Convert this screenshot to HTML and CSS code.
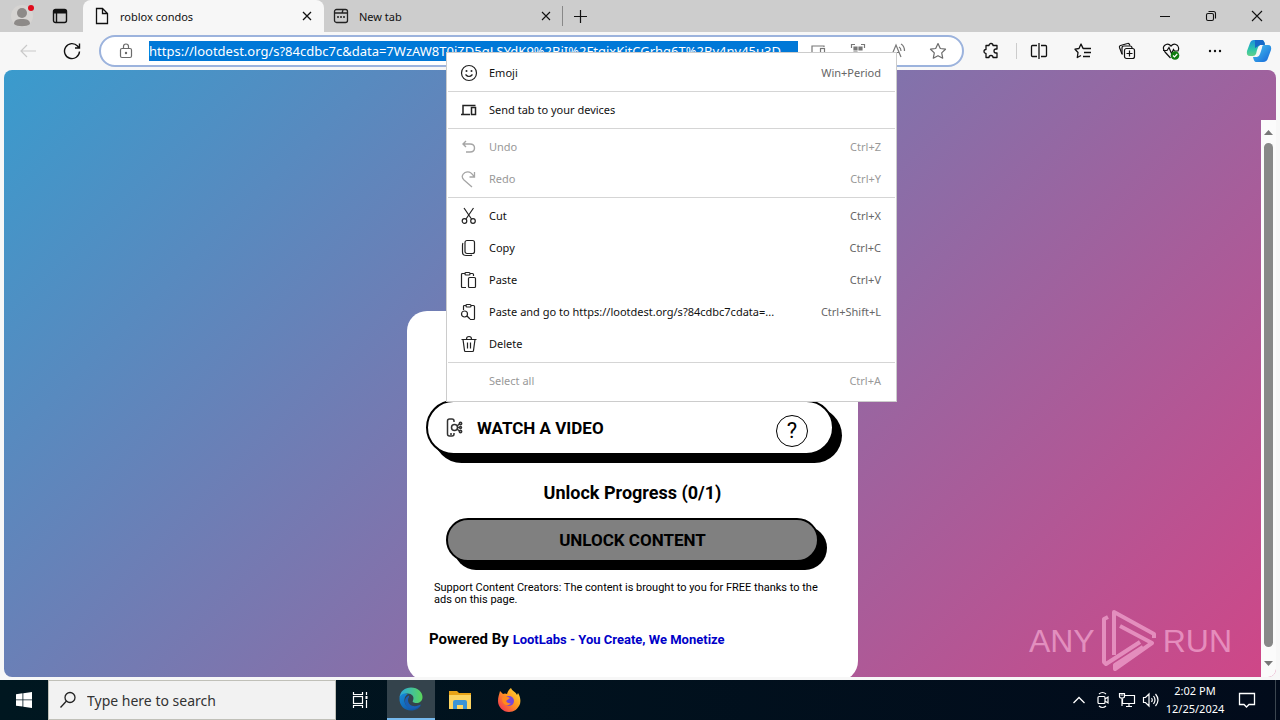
FILE: index.html
```html
<!DOCTYPE html>
<html lang="en">
<head>
<meta charset="utf-8">
<title>roblox condos</title>
<link rel="stylesheet" href="styles.css">
</head>
<body>
<div class="desktop">
  <header class="tabstrip">
    <button class="profile" aria-label="Profile"><svg width="24" height="26" viewBox="0 0 24 26"><circle cx="12" cy="13" r="11" fill="#d6d4d2"/><circle cx="12" cy="10" r="5" fill="#8d8a88"/><path d="M4 21c0-4 3-5 8-5s8 1 8 5c-3 3-13 3-16 0z" fill="#8d8a88"/><circle cx="21" cy="5" r="3" fill="#e00b1c"/></svg></button>
    <button class="workspace" aria-label="Tab actions"><svg width="16" height="16" viewBox="0 0 16 16" fill="none" stroke="#111" stroke-width="1.4"><rect x="1.5" y="1.5" width="13" height="13" rx="2"/><path d="M2 3h12M2 4.500h12" stroke-width="2"/><path d="M4.500 5v9"/></svg></button>
    <div class="tab tab-active">
      <svg width="16" height="18" viewBox="0 0 16 18" fill="none" stroke="#111" stroke-width="1.3"><path d="M2.500 1.500h6l5 5v10h-11zM8.500 1.500v5h5"/></svg>
      <span class="tab-title">roblox condos</span>
      <button class="tab-close" aria-label="Close tab"><svg width="10" height="10" viewBox="0 0 10 10" stroke="#111" stroke-width="1.3"><path d="M1 1l8 8M9 1L1 9"/></svg></button>
    </div>
    <div class="tab tab-second">
      <svg width="16" height="16" viewBox="0 0 16 16" fill="none" stroke="#222" stroke-width="1.3"><rect x="1.500" y="1.500" width="13" height="13" rx="2"/><path d="M2 5h7l1-3M9 5h5"/><path d="M4 9h2M7 9h2M10 9h2" stroke-width="1.500"/></svg>
      <span class="tab-title">New tab</span>
      <button class="tab-close" aria-label="Close tab"><svg width="10" height="10" viewBox="0 0 10 10" stroke="#111" stroke-width="1.1"><path d="M1 1l8 8M9 1L1 9"/></svg></button>
    </div>
    <button class="newtab" aria-label="New tab"><svg width="15" height="15" viewBox="0 0 15 15" stroke="#111" stroke-width="1.2"><path d="M7.500 1v13M1 7.500h13"/></svg></button>
    <div class="window-controls">
      <button aria-label="Minimize"><svg width="12" height="12" viewBox="0 0 12 12" stroke="#111"><path d="M1 6.500h10"/></svg></button>
      <button aria-label="Restore"><svg width="12" height="12" viewBox="0 0 12 12" fill="none" stroke="#111" stroke-width="1.1"><rect x="1.500" y="3.500" width="7" height="7" rx="1.500"/><path d="M3.500 1.500h5q2 0 2 2v5"/></svg></button>
      <button aria-label="Close"><svg width="12" height="12" viewBox="0 0 12 12" stroke="#111" stroke-width="1.1"><path d="M1 1l10 10M11 1L1 11"/></svg></button>
    </div>
  </header>

  <div class="toolbar">
    <button class="nav" aria-label="Back"><svg width="18" height="16" viewBox="0 0 18 16" fill="none" stroke="#c9c9c9" stroke-width="1.200"><path d="M17 8H2M8 2L2 8l6 6"/></svg></button>
    <button class="nav" aria-label="Refresh"><svg width="18" height="18" viewBox="0 0 18 18" fill="none" stroke="#111" stroke-width="1.400"><path d="M16.500 9.500a7.500 7.500 0 1 1-2-5.500l1.500 1.800M16.500 1.500v4.500H12"/></svg></button>
    <div class="address">
      <svg width="14" height="16" viewBox="0 0 14 16" fill="none" stroke="#6b6b6b" stroke-width="1.200"><rect x="1.500" y="5.500" width="11" height="9" rx="1.500"/><path d="M4.500 5.500V3.500a2.500 2.500 0 0 1 5 0v2"/><circle cx="7" cy="10" r=".6" fill="#555"/></svg>
      <input class="url" aria-label="Address" value="https://lootdest.org/s?84cdbc7c&amp;data=7WzAW8T0jZD5gLSYdK9%2BiI%2FtqjxKjtCGrhg6T%2By4nv45u3D">
      <button aria-label="Send to device"><svg width="16" height="16" viewBox="0 0 16 16" fill="none" stroke="#777" stroke-width="1.200"><path d="M14 4V3H2v9h6M0 12h8"/><rect x="10.500" y="5.500" width="4" height="8"/></svg></button>
      <button aria-label="Share code"><svg width="16" height="16" viewBox="0 0 16 16" fill="none" stroke="#777" stroke-width="1.200"><path d="M1.500 5V1.500H5M11 1.500h3.500V5M1.500 11v3.500H5M11 14.500h3.500V11"/><path d="M4 4h3v3H4zM9 4h3v3H9zM4 9h3v3H4z" fill="#777"/></svg></button>
      <button aria-label="Read aloud"><svg width="18" height="16" viewBox="0 0 18 16" fill="none" stroke="#777" stroke-width="1.200"><path d="M2 14L7 2l5 12M4 9.500h6M10 4q2 1 2 4M12 1q3.500 2 3.500 7"/></svg></button>
      <button aria-label="Favorite"><svg width="18" height="18" viewBox="0 0 18 18" fill="none" stroke="#6b6b6b" stroke-width="1.200"><path d="M9 1.500l2.300 5 5.200.7-3.800 3.700 1 5.300L9 13.700l-4.700 2.500 1-5.300L1.500 7.200l5.200-.7z" stroke-linejoin="round"/></svg></button>
    </div>
    <div class="actions">
      <button class="extensions" aria-label="Extensions"><svg width="18" height="18" viewBox="0 0 18 18" fill="none" stroke="#111" stroke-width="1.300"><path d="M4 3.500h3a2 2 0 1 1 4 0h4v3.500h-1a2 2 0 1 0 0 4h1v4.500h-4a2 2 0 1 0-4 0H4v-4a2 2 0 1 1 0-4z" stroke-linejoin="round"/></svg></button>
      <button aria-label="Split screen"><svg width="18" height="18" viewBox="0 0 18 18" fill="none" stroke="#111" stroke-width="1.300"><path d="M9 1v16M7 3.500H2.500q-1 0-1 1v9q0 1 1 1H7M11 3.500h4.500q1 0 1 1v9q0 1-1 1H11"/></svg></button>
      <button aria-label="Favorites"><svg width="18" height="18" viewBox="0 0 18 18" fill="none" stroke="#111" stroke-width="1.300"><path d="M9 6.500L7 2 5 6.500l-4 .7L4 10.500l-.7 5L7 13.500M7 2l2.200 4.500H17M10 10.500h7M9 14.500h7" stroke-linejoin="round"/></svg></button>
      <button aria-label="Collections"><svg width="18" height="18" viewBox="0 0 18 18" fill="none" stroke="#111" stroke-width="1.200"><path d="M4 12L1.500 5.500q-.5-1.500 1-2l7-2q1.500-.5 2 1l.3 1"/><path d="M4.500 12.500q-.5-.5-.5-1.500V6q0-2 2-2h6q2 0 2 2"/><rect x="6.500" y="6.500" width="10" height="10" rx="2"/><path d="M11.500 8.500v6M8.500 11.500h6"/></svg></button>
      <button aria-label="Browser essentials"><svg width="18" height="18" viewBox="0 0 18 18" fill="none" stroke="#111" stroke-width="1.200"><path d="M8.500 16L3 10Q0 6 2.500 3.500 6 .5 9 4q3-3.500 6.500-.5Q17.500 6 16 9M1 8.500h4l2-3 2.500 6 2-4 1 1.500h4"/><circle cx="13" cy="13.500" r="4.300" fill="#107c10" stroke="none"/><path d="M11 13.500l1.500 1.500 2.700-3" stroke="#fff"/></svg></button>
      <button aria-label="Settings and more"><svg width="16" height="4" viewBox="0 0 16 4" fill="#111"><circle cx="3" cy="2" r="1.200"/><circle cx="8" cy="2" r="1.200"/><circle cx="13" cy="2" r="1.200"/></svg></button>
      <button class="copilot" aria-label="Copilot"><svg width="26" height="24" viewBox="0 0 26 24"><defs><linearGradient id="cpa" x1="0" y1="0" x2="0" y2="1"><stop offset="0" stop-color="#1b8fdc"/><stop offset=".6" stop-color="#2fc6a8"/><stop offset="1" stop-color="#64d08a"/></linearGradient><linearGradient id="cpb" x1="0" y1="0" x2="1" y2="1"><stop offset="0" stop-color="#49c8f0"/><stop offset="1" stop-color="#1464d8"/></linearGradient></defs><path d="M8 1h8q2 0 3 4l-5 1q-2 1-3 5l-1 4q-1 2-3 2H4q-4 0-3-5L4 4q1-3 4-3z" fill="url(#cpa)"/><path d="M9 1h7q2 0 3 5h-5L9 9z" fill="#1769c8"/><path d="M18 6h4q4 0 3 5l-3 8q-1 4-5 4h-7q-2 0-3-5h4q2 0 3-3l2-6q0-3 2-3z" fill="url(#cpb)"/></svg></button>
    </div>
  </div>

  <main class="viewport">
    <div class="page">
      <section class="card">
        <div class="task">
          <button class="task-button">
            <svg width="18" height="20" viewBox="0 0 18 20" fill="none" stroke="#333" stroke-width="1.500"><path d="M9 4V3q0-2-2-2H4.500q-2 0-2 2v13q0 2 2 2H7q2 0 2-2v-1M5 16h2"/><circle cx="9.500" cy="9.500" r="3"/><path d="M12 8l3-2.500M12 9.500h2M12 11l3 2.500"/><circle cx="15.500" cy="5.500" r="1.200"/><circle cx="15.500" cy="9.500" r="1"/><circle cx="15.500" cy="13.500" r="1.200"/></svg>
            <span>WATCH A VIDEO</span>
          </button>
          <button class="help" aria-label="Help">?</button>
        </div>
        <h2 class="progress">Unlock Progress (0/1)</h2>
        <button class="unlock">UNLOCK CONTENT</button>
        <p class="support">Support Content Creators: The content is brought to you for FREE thanks to the ads on this page.</p>
        <p class="powered">Powered By <a href="#">LootLabs - You Create, We Monetize</a></p>
      </section>
      <div class="watermark">
        <span>ANY</span>
        <svg width="58" height="62" viewBox="0 0 58 62" fill="none" stroke="#f3a9d2" stroke-width="4" stroke-linejoin="round"><path d="M14 45V2l40 22v4M20 16l32 17L15 59v-4l28-18"/><path d="M8 7L4 9v43l2 2 34-22"/></svg>
        <span>RUN</span>
      </div>
    </div>
    <div class="scrollbar">
      <svg width="9" height="5" viewBox="0 0 9 5" fill="#777"><path d="M0 5l4.500-5L9 5z"/></svg>
      <div class="thumb"></div>
      <svg width="9" height="5" viewBox="0 0 9 5" fill="#777"><path d="M0 0l4.500 5L9 0z"/></svg>
    </div>
  </main>

  <footer class="taskbar">
    <button class="start" aria-label="Start"><svg width="16" height="16" viewBox="0 0 16 16" fill="#fff"><path d="M0 2.200l6.500-.9v6.200H0zM7.300 1.200L16 0v7.500H7.300zM0 8.300h6.500v6.200L0 13.700zM7.300 8.300H16V16l-8.700-1.200z"/></svg></button>
    <label class="search">
      <svg width="18" height="18" viewBox="0 0 18 18" fill="none" stroke="#222" stroke-width="1.300"><circle cx="11" cy="6.500" r="5"/><path d="M7.500 10L1.500 16.500"/></svg>
      <input type="text" placeholder="Type here to search" aria-label="Type here to search">
    </label>
    <div class="apps">
      <button aria-label="Task view"><svg width="18" height="18" viewBox="0 0 18 18" fill="none" stroke="#fff" stroke-width="1.200"><rect x="2.500" y="5.500" width="9" height="7"/><path d="M2.500 1v2.500h9V1M2.500 17v-2.500h9V17M15.500 1v3M15.500 9v8" /><path d="M14.500 5h2v3h-2z" fill="#fff" stroke="none"/></svg></button>
      <button class="app-active" aria-label="Microsoft Edge"><svg width="24" height="24" viewBox="0 0 24 24"><defs><linearGradient id="eg" x1="0" y1="0" x2="1" y2="0"><stop offset="0" stop-color="#29a8e0"/><stop offset="1" stop-color="#5ad65a"/></linearGradient><linearGradient id="eb" x1="0" y1="0" x2="1" y2="1"><stop offset="0" stop-color="#168bd8"/><stop offset="1" stop-color="#0f4b9c"/></linearGradient></defs><path d="M.5 11C1 4 6 .5 12 .5c7 0 11.500 5 11.500 9.500 0 4-3 6-6 6-3 0-4.500-1-3.500-2.500C16 9 12 6 8 6.500 4 7 1 9 .5 11z" fill="url(#eg)"/><path d="M.5 11C1 7 6 5.500 9 7c-4 2-5 8-1 12 4 3.500 10 2 14-1-2 4-6 5.500-10 5.500C5 23.500 0 18 .5 11z" fill="url(#eb)"/><path d="M10 10c-2 3-1 8 4 9 3 .5 6-.5 8-1.500-5 7-15 5-16-2-.500-3 1-6 4-7z" fill="#1a5fb4"/></svg></button>
      <button aria-label="File Explorer"><svg width="22" height="20" viewBox="0 0 22 20"><path d="M0 1h8l2 2h12v5H0z" fill="#e8a317"/><path d="M0 5h22v14H0z" fill="#fcd462"/><path d="M4 19v-7q0-2 2-2h10q2 0 2 2v7h-4v-4H8v4z" fill="#3a93d6"/></svg></button>
      <button aria-label="Firefox"><svg width="24" height="24" viewBox="0 0 24 24"><defs><linearGradient id="ff" x1="1" y1="0" x2="0" y2="1"><stop offset="0" stop-color="#ffe23c"/><stop offset=".45" stop-color="#ff9a1f"/><stop offset="1" stop-color="#f0225c"/></linearGradient></defs><path d="M3 3l3 3q2-1 4 0c1-4 3-5 4-6 1 3 5 4 6 7l1-2c2 3 3 7 2 11-2 5-6 8-11 8C6 24 1 19 1 13 1 9 2 7 3 3z" fill="url(#ff)"/><circle cx="12" cy="13" r="5" fill="#7648d8"/><path d="M5 10q4-3 8 0l-4 3q2 3 5 2-3 4-7 1-2-2-2-6z" fill="#ff8a1c"/></svg></button>
    </div>
    <div class="tray">
      <button aria-label="Show hidden icons"><svg width="14" height="8" viewBox="0 0 14 8" fill="none" stroke="#fff" stroke-width="1.300"><path d="M1.500 7L7 1.500 12.500 7"/></svg></button>
      <button aria-label="Meet now"><svg width="14" height="18" viewBox="0 0 14 18" fill="none" stroke="#fff" stroke-width="1.200"><rect x="2" y="5.500" width="7" height="7" rx="1"/><path d="M9 8l3-2v6l-3-2M3 3q3.500-3 7 0M3 15q3.500 3 7 0"/></svg></button>
      <button aria-label="Network"><svg width="18" height="16" viewBox="0 0 18 16" fill="none" stroke="#fff" stroke-width="1.200"><path d="M6 3.500h10.500v8H4.500V7M8 14.500h6M11 12v2M1.500 1.500h5v3q0 1.500-2.500 1.500t-2.500-1.500zM2.500 3h3M4 6v8"/></svg></button>
      <button aria-label="Volume"><svg width="18" height="16" viewBox="0 0 18 16" fill="none" stroke="#fff" stroke-width="1.200"><path d="M1.500 5.500h2L7 2v12l-3.500-3.500h-2zM9.500 6q1.500 2 0 4M11.500 4q3 4 0 8M13.500 2q5 6 0 12"/></svg></button>
      <div class="clock"><span>2:02 PM</span><span>12/25/2024</span></div>
      <button class="notifications" aria-label="Notifications"><svg width="18" height="18" viewBox="0 0 18 18" fill="none" stroke="#fff" stroke-width="1.300"><path d="M1.500 2.500h15v11H11l-2.500 2.500L6 13.500H1.500z"/></svg></button>
    </div>
  </footer>

  <div class="menu" role="menu">
    <button role="menuitem"><svg width="18" height="18" viewBox="0 0 18 18" fill="none" stroke="#222" stroke-width="1.200"><circle cx="9" cy="9" r="7.500"/><path d="M5.500 10.500q3.500 4 7 0"/><circle cx="6.500" cy="7" r=".4" fill="#222"/><circle cx="11.500" cy="7" r=".4" fill="#222"/></svg><span>Emoji</span><kbd>Win+Period</kbd></button>
    <hr>
    <button role="menuitem"><svg width="18" height="18" viewBox="0 0 18 18" fill="none" stroke="#222" stroke-width="1.500"><path d="M15.500 4.500H3V13M1 13.500h9" /><rect x="11.500" y="6.500" width="4" height="7"/></svg><span>Send tab to your devices</span></button>
    <hr>
    <button role="menuitem" disabled><svg width="18" height="18" viewBox="0 0 18 18" fill="none" stroke="#a5a5a5" stroke-width="1.400"><path d="M6 3L3 6l3 3M3 6h7q4.500 0 4.500 4T10 14H6"/></svg><span>Undo</span><kbd>Ctrl+Z</kbd></button>
    <button role="menuitem" disabled><svg width="18" height="18" viewBox="0 0 18 18" fill="none" stroke="#a5a5a5" stroke-width="1.300"><path d="M14.500 2v5h-5M14 6.500Q10 0 5 2.500 0 6 4 10l8 7"/></svg><span>Redo</span><kbd>Ctrl+Y</kbd></button>
    <hr>
    <button role="menuitem"><svg width="18" height="18" viewBox="0 0 18 18" fill="none" stroke="#222" stroke-width="1.200"><circle cx="4.500" cy="14" r="2.300"/><circle cx="13" cy="14" r="2.300"/><path d="M4 1l7.500 11M13.500 1L6 12"/></svg><span>Cut</span><kbd>Ctrl+X</kbd></button>
    <button role="menuitem"><svg width="18" height="18" viewBox="0 0 18 18" fill="none" stroke="#222" stroke-width="1.200"><rect x="5" y="1.500" width="9.500" height="13" rx="2"/><path d="M3 4q-.500 1-.500 2v7q0 3.500 3.500 3.500h4q1.500 0 2-.500"/></svg><span>Copy</span><kbd>Ctrl+C</kbd></button>
    <button role="menuitem"><svg width="18" height="18" viewBox="0 0 18 18" fill="none" stroke="#222" stroke-width="1.200"><path d="M6 16.500H2.500q-1 0-1-1v-12q0-1 1-1H5M10 2.500h2.500q1 0 1 1V5"/><rect x="5" y="1.500" width="5" height="2.500" rx="1"/><rect x="8.500" y="6.500" width="7" height="10" rx="1"/></svg><span>Paste</span><kbd>Ctrl+V</kbd></button>
    <button role="menuitem"><svg width="18" height="18" viewBox="0 0 18 18" fill="none" stroke="#222" stroke-width="1.200"><path d="M3.500 7V3.500q0-1 1-1H6M11 2.500h2.500q1 0 1 1v12q0 1-1 1H10"/><rect x="6" y="1.500" width="5" height="2.500" rx="1"/><circle cx="4.500" cy="11" r="3"/><path d="M7 13l3 3"/></svg><span>Paste and go to https://lootdest.org/s?84cdbc7cdata=...</span><kbd>Ctrl+Shift+L</kbd></button>
    <button role="menuitem"><svg width="18" height="18" viewBox="0 0 18 18" fill="none" stroke="#222" stroke-width="1.200"><path d="M1.500 4.500h15M3 4.500l1.500 11q0 1 1 1h7q1 0 1-1L15 4.500M6.500 4q0-2.500 2.500-2.500t2.500 2.500M7.500 7.500v6M10.500 7.500v6"/></svg><span>Delete</span></button>
    <hr>
    <button role="menuitem" disabled><i class="no-icon"></i><span>Select all</span><kbd>Ctrl+A</kbd></button>
  </div>
</div>
</body>
</html>
```
FILE: styles.css
```css
* { box-sizing: border-box; }
body { margin: 0; font-family: "Noto Sans", "Open Sans", sans-serif; font-size: 12px; color: #111; }
button, input { font: inherit; color: inherit; border: 0; padding: 0; background: none; margin: 0; }
button { display: flex; align-items: center; justify-content: center; flex: none; }
svg { flex: none; display: block; }
.desktop { height: 100vh; display: flex; flex-direction: column; background: #f7f7f7; position: relative; overflow: hidden; }

.tabstrip { height: 32px; flex: none; display: flex; background: #cdcdcd; }
.profile { width: 44px; }
.workspace { width: 32px; margin-right: 7px; }
.tab { display: flex; align-items: center; gap: 10px; padding: 0 12px; width: 241px; }
.tab-active { background: #f7f7f7; border-radius: 8px 8px 0 0; padding-left: 11px; }
.tab-second { width: 239px; padding: 0 11px 0 9px; border-right: 1px solid #888; height: 20px; align-self: center; }
.tab-title { flex: 1; font-size: 11px; }
.newtab { width: 34px; }
.window-controls { margin-left: auto; display: flex; }
.window-controls button { width: 46px; }

.toolbar { height: 38px; flex: none; display: flex; align-items: center; }
.nav { width: 44px; height: 32px; margin-left: 6px; }
.nav + .nav { margin-left: 0; }
.address { flex: 1; min-width: 0; height: 32px; margin-left: 5px; display: flex; align-items: center; border: 2px solid #9cb3dd; border-radius: 16px; background: #fff; padding: 0 4px 0 18px; }
.address button { width: 40px; height: 28px; }
.url { flex: 1; min-width: 0; margin-left: 16px; height: 20px; background: #0078d7; color: #fff; font-size: 13px; line-height: 20px; }
.actions { display: flex; align-items: center; padding-left: 5px; }
.actions button { width: 44px; height: 28px; }
.actions .extensions { width: 48px; height: 16px; padding-right: 4px; border-right: 1px solid #ccc; }
.actions .copilot { width: 43px; }

.viewport { flex: 1; min-height: 0; margin: 0 4px 3px; display: flex; border-radius: 8px; overflow: hidden; background: linear-gradient(135deg, #3a9bcd, #d04687); }
.page { flex: 1; position: relative; display: flex; justify-content: center; align-items: flex-start; overflow: hidden; font-family: Roboto, sans-serif; color: #000; }
.card { width: 451px; margin-top: 241px; padding: 89px 19px 32px; background: #fff; border-radius: 20px; display: flex; flex-direction: column; }
.task { height: 55px; width: 408px; border: 2px solid #000; border-radius: 28px; box-shadow: 8px 8px 0 #000; display: flex; align-items: center; justify-content: space-between; padding: 0 24px 0 17px; background: #fff; }
.task-button { gap: 14px; font-size: 17px; font-weight: 700; height: 100%; }
.help { width: 32px; height: 32px; border: 1px solid #000; border-radius: 50%; font-size: 22px; margin-top: 6px; }
.progress { margin: 28px 0 15px; text-align: center; font-size: 18px; line-height: 20px; font-weight: 700; }
.unlock { width: 373px; height: 44px; margin-left: 20px; border: 2px solid #000; border-radius: 22px; box-shadow: 8px 8px 0 #000; background: #808080; font-size: 17px; font-weight: 700; }
.support { margin: 20px 17px 0 8px; font-size: 11px; line-height: 12px; }
.powered { margin: 24px 0 0 3px; font-size: 15px; line-height: 18px; font-weight: 700; white-space: nowrap; }
.powered a { font-size: 13px; color: #0000c8; text-decoration: none; }
.watermark { position: absolute; right: 29px; bottom: 5px; display: flex; align-items: center; gap: 5px; font: 32px "Liberation Sans Narrow", "Liberation Sans", sans-serif; color: #f3a9d2; opacity: .7; }
.scrollbar { width: 15px; flex: none; margin-top: 50px; padding: 10px 0 11px; background: #fbfbfb; display: flex; flex-direction: column; align-items: center; gap: 8px; }
.scrollbar .thumb { width: 9px; flex: 1; margin-bottom: 6px; border-radius: 5px; background: #888; }

.taskbar { height: 40px; flex: none; display: flex; background: linear-gradient(90deg, #001720, #020b1b); color: #fff; }
.start { width: 48px; }
.search { width: 288px; display: flex; align-items: center; background: #f2f2f2; border: 1px solid #c0c0b8; padding-left: 10px; gap: 10px; }
.search input { flex: 1; min-width: 0; font-size: 14px; }
.search input::placeholder { color: #333; opacity: 1; }
.apps { display: flex; gap: 1px; }
.apps button { width: 48px; }
.apps .app-active { background: #34434c; border-bottom: 2px solid #76b9ed; margin-left: 2px; }
.tray { margin-left: auto; display: flex; padding-right: 4px; }
.tray button { width: 24px; }
.clock { width: 64px; display: flex; flex-direction: column; justify-content: center; text-align: center; font-size: 11px; line-height: 18px; }
.tray .notifications { width: 49px; border-right: 1px solid #3c4650; padding-right: 9px; }

.menu { position: absolute; left: 446px; top: 52px; width: 451px; padding: 4px 1px; background: #fff; border: 1px solid #ccc; }
.menu button { width: 100%; height: 32px; padding: 0 14px 0 12px; justify-content: flex-start; gap: 11px; font-size: 11px; color: #111; }
.menu span, .menu kbd { padding-bottom: 2px; }
.menu span { flex: 1; text-align: left; white-space: nowrap; }
.menu kbd { font: inherit; color: #666; }
.menu button:disabled, .menu button:disabled kbd { color: #999; }
.menu hr { margin: 2px 0; border: 0; height: 1px; background: #d5d5d5; }
.no-icon { width: 18px; }
```
